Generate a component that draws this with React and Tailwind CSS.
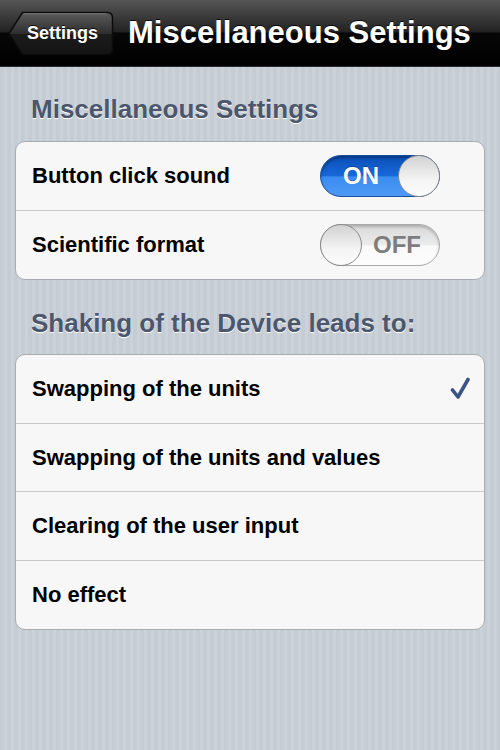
const font = { fontFamily: '"Liberation Sans", Arial, sans-serif' };

function BackButton() {
  return (
    <div className="relative h-[45px] w-[106px] shrink-0">
      <svg className="absolute inset-0" width="106" height="45" viewBox="0 0 106 45">
        <defs>
          <linearGradient id="bb" x1="0" y1="0" x2="0" y2="1">
            <stop offset="0" stopColor="#5c5c5c" />
            <stop offset="0.5" stopColor="#2e2e2e" />
            <stop offset="0.51" stopColor="#1c1c1c" />
            <stop offset="1" stopColor="#141414" />
          </linearGradient>
        </defs>
        <path
          d="M1 22.5 L14.5 1.5 L99 1.5 Q104.5 1.5 104.5 7 L104.5 38 Q104.5 43.5 99 43.5 L14.5 43.5 Z"
          fill="url(#bb)"
          stroke="#0c0c0c"
          strokeWidth="1.5"
          strokeLinejoin="round"
        />
        <path d="M15.5 2.8 L98.5 2.8" stroke="#7a7a7a" strokeWidth="1" />
      </svg>
      <span className="absolute inset-0 flex items-center pl-[19px] text-[18px] font-bold text-white [text-shadow:0_-1px_0_rgba(0,0,0,0.8)]">
        Settings
      </span>
    </div>
  );
}

function Toggle({ on }) {
  if (on) {
    return (
      <div className="relative flex h-[42px] w-[120px] items-center rounded-full border border-[#1a4f9c] bg-[linear-gradient(180deg,#0a4fb8_0%,#1769d9_50%,#3a8cf2_52%,#4d9af5_100%)] shadow-[inset_0_2px_3px_rgba(0,0,0,0.35)]">
        <span className="pl-[22px] text-[24px] font-bold text-white [text-shadow:0_-1px_0_rgba(0,0,0,0.3)]">ON</span>
        <div className="absolute right-[-1px] top-[-1px] h-[42px] w-[42px] rounded-full border border-[#8a8a8a] bg-[linear-gradient(180deg,#d2d2d2_0%,#f4f4f4_60%,#fcfcfc_100%)]" />
      </div>
    );
  }
  return (
    <div className="relative flex h-[42px] w-[120px] items-center justify-end rounded-full border border-[#a9a9a9] bg-[linear-gradient(180deg,#d9d9d9_0%,#ececec_50%,#f9f9f9_52%,#fdfdfd_100%)] shadow-[inset_0_2px_3px_rgba(0,0,0,0.2)]">
      <span className="pr-[18px] text-[24px] font-bold text-[#7d7d7d]">OFF</span>
      <div className="absolute left-[-1px] top-[-1px] h-[42px] w-[42px] rounded-full border border-[#8a8a8a] bg-[linear-gradient(180deg,#d2d2d2_0%,#f4f4f4_60%,#fcfcfc_100%)]" />
    </div>
  );
}

function Row({ label, last, children }) {
  return (
    <div
      className={
        "flex h-[68.5px] items-center justify-between pl-[16px] pr-[44px] " +
        (last ? "" : "border-b border-[#c9c9c9]")
      }
    >
      <span className="text-[22px] font-bold text-black">{label}</span>
      {children}
    </div>
  );
}

function SectionHeader({ children }) {
  return (
    <div className="flex h-[30px] items-center pl-[31px] text-[26px] font-bold text-[#4c566c] [text-shadow:0_1px_0_#ffffff]">
      {children}
    </div>
  );
}

function CheckMark() {
  return (
    <svg width="20" height="23" viewBox="0 0 20 23">
      <path
        d="M2.5 13 L8 20 L18 2.5"
        fill="none"
        stroke="#3b5385"
        strokeWidth="3.6"
        strokeLinecap="round"
        strokeLinejoin="round"
      />
    </svg>
  );
}

const choices = [
  "Swapping of the units",
  "Swapping of the units and values",
  "Clearing of the user input",
  "No effect",
];

export default function App() {
  return (
    <div
      style={font}
      className="h-[750px] w-[500px] overflow-hidden bg-[repeating-linear-gradient(90deg,#c5ccd4_0px,#c5ccd4_4px,#cbd2d9_4px,#cbd2d9_7px)]"
    >
      {/* NAV BAR */}
      <header className="flex h-[67px] items-center gap-[14px] border-b border-[#2a2a2a] bg-[linear-gradient(180deg,#555555_0%,#222222_48%,#070707_50%,#000000_100%)] pl-[8px]">
        <BackButton />
        <h1 className="text-[31px] font-bold text-white [text-shadow:0_-1px_0_rgba(0,0,0,0.8)]">
          Miscellaneous Settings
        </h1>
      </header>

      <main className="pt-[27px]">
        <SectionHeader>Miscellaneous Settings</SectionHeader>
        <div className="mx-[15px] mt-[17px] overflow-hidden rounded-[10px] border border-[#a9adb3] bg-[#f7f7f7]">
          <Row label="Button click sound">
            <Toggle on />
          </Row>
          <Row label="Scientific format" last>
            <Toggle on={false} />
          </Row>
        </div>

        <div className="mt-[28px]">
          <SectionHeader>Shaking of the Device leads to:</SectionHeader>
        </div>
        <div className="mx-[15px] mt-[16px] overflow-hidden rounded-[10px] border border-[#a9adb3] bg-[#f7f7f7]">
          {choices.map((c, i) => (
            <div
              key={c}
              className={
                "flex h-[68.5px] items-center justify-between pl-[16px] pr-[14px] " +
                (i === choices.length - 1 ? "" : "border-b border-[#c9c9c9]")
              }
            >
              <span className="text-[22px] font-bold text-black">{c}</span>
              {i === 0 && <CheckMark />}
            </div>
          ))}
        </div>
      </main>
    </div>
  );
}
